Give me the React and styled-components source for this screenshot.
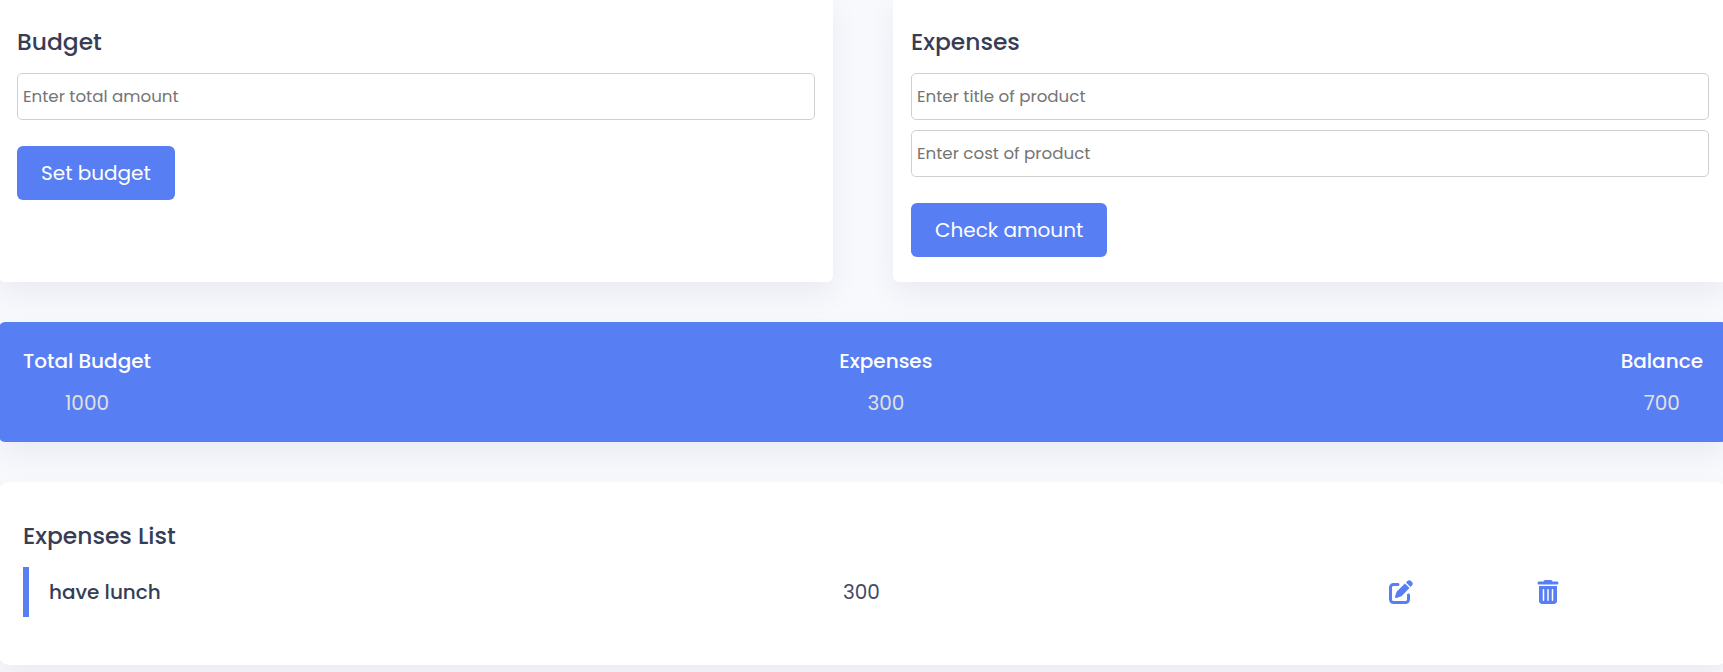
import React from "react";
import styled, { createGlobalStyle } from "styled-components";
import { FaPenToSquare, FaTrashCan } from "react-icons/fa6";

const GlobalStyle = createGlobalStyle`
  * { box-sizing: border-box; margin: 0; padding: 0; }
  body {
    background: #f7f9fd;
    font-family: Poppins, Inter, "Open Sans", sans-serif;
    font-size: 20px;
  }
`;

const Page = styled.div`
  height: 672px;
  overflow: hidden;
`;

const Wrapper = styled.main`
  width: 1728px;
  margin: -3px 0 0 -1px;
  display: flex;
  flex-direction: column;
  gap: 40px;
`;

const Forms = styled.div`
  display: grid;
  grid-template-columns: 1fr 1fr;
  gap: 60px;
`;

const Card = styled.section`
  height: 285px;
  padding: 27px 18px 0;
  background: #fff;
  border-radius: 6px;
  box-shadow: 0 12px 30px rgba(28, 0, 80, 0.06);
`;

const Title = styled.h3`
  font-size: 23.4px;
  font-weight: 500;
  line-height: 35px;
  color: #363d55;
`;

const Field = styled.input`
  display: block;
  width: 100%;
  height: 47px;
  margin-top: ${(p) => (p.$first ? "14px" : "10px")};
  padding: 0 5px 2px;
  border: 1px solid #d0d0d0;
  border-radius: 5px;
  outline: none;
  background: transparent;
  font: 400 16.7px Poppins, Inter, sans-serif;
  color: #414a67;
  &::placeholder { color: #757575; }
`;

const Button = styled.button`
  height: 54px;
  margin-top: 26px;
  padding: 0 24px;
  border: none;
  border-radius: 6px;
  background: #587ef4;
  color: #fff;
  font: 400 20px Poppins, Inter, sans-serif;
  cursor: pointer;
`;

const Summary = styled.section`
  height: 120px;
  padding: 24px 24px 0;
  display: flex;
  justify-content: space-between;
  background: #587ef4;
  border-radius: 6px;
  box-shadow: 0 12px 30px rgba(28, 0, 80, 0.06);
  text-align: center;
`;

const Label = styled.p`
  font-weight: 500;
  line-height: 30px;
  color: #fff;
`;

const Amount = styled.span`
  display: block;
  margin-top: 12px;
  line-height: 30px;
  color: #e1e1e1;
`;

const List = styled.section`
  height: 183px;
  padding: 36px 24px 0;
  background: #fff;
  border-radius: 10px;
  box-shadow: 0 12px 30px rgba(28, 0, 80, 0.06);
`;

const Item = styled.div`
  height: 50px;
  margin-top: 14px;
  padding-left: 20px;
  display: grid;
  grid-template-columns: 794px 546px 147px 1fr;
  align-items: center;
  border-left: 6px solid #587ef4;
`;

const Product = styled.p`
  font-weight: 500;
  color: #363d55;
`;

const Cost = styled.p`
  color: #414a67;
`;

const IconButton = styled.button`
  display: flex;
  width: 24px;
  border: none;
  background: none;
  color: #587ef4;
  font-size: 24px;
  cursor: pointer;
`;

const totals = [
  ["Total Budget", 1000],
  ["Expenses", 300],
  ["Balance", 700],
];

export default function App() {
  return (
    <Page>
      <GlobalStyle />
      <Wrapper>
        <Forms>
          <Card>
            <Title>Budget</Title>
            <Field $first placeholder="Enter total amount" />
            <Button>Set budget</Button>
          </Card>
          <Card>
            <Title>Expenses</Title>
            <Field $first placeholder="Enter title of product" />
            <Field placeholder="Enter cost of product" />
            <Button>Check amount</Button>
          </Card>
        </Forms>
        <Summary>
          {totals.map(([label, value]) => (
            <div key={label}>
              <Label>{label}</Label>
              <Amount>{value}</Amount>
            </div>
          ))}
        </Summary>
        <List>
          <Title>Expenses List</Title>
          <Item>
            <Product>have lunch</Product>
            <Cost>300</Cost>
            <IconButton aria-label="Edit"><FaPenToSquare /></IconButton>
            <IconButton aria-label="Delete"><FaTrashCan /></IconButton>
          </Item>
        </List>
      </Wrapper>
    </Page>
  );
}
